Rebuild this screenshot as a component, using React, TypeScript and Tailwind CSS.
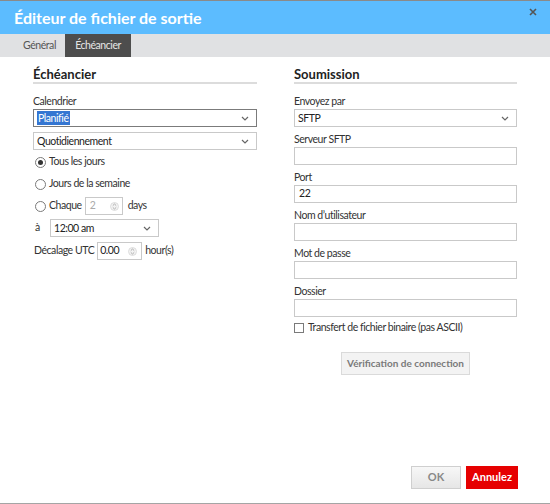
import { useState } from 'react';

const font = { fontFamily: 'Lato, "Open Sans", sans-serif' };
// small ui text, narrowed a bit to match the original widths
const t = 'text-[10.5px] tracking-[-0.45px]';

function Chevron() {
  return (
    <svg width="8" height="5" viewBox="0 0 8 5" className="shrink-0">
      <path d="M1 1 L4 4 L7 1" fill="none" stroke="#666" strokeWidth="1.2" />
    </svg>
  );
}

function Spinner() {
  return (
    <svg width="9" height="9" viewBox="0 0 9 9" className="shrink-0">
      <circle cx="4.5" cy="4.5" r="4" fill="#f3f3f3" stroke="#d6d6d6" strokeWidth="0.8" />
      <path d="M2.8 3.6 L4.5 2 L6.2 3.6 M2.8 5.4 L4.5 7 L6.2 5.4" fill="none" stroke="#999" strokeWidth="0.8" />
    </svg>
  );
}

function Select({ value, focused, selected }: { value: string; focused?: boolean; selected?: boolean }) {
  return (
    <div
      className={`h-[18px] flex items-center justify-between pl-[3px] pr-[7px] border bg-white ${
        focused ? 'border-[#7b7b7b]' : 'border-[#c9c9c9]'
      }`}
    >
      <span className={`${t} leading-[14px] ${selected ? 'bg-[#3476d2] text-white px-[1px]' : 'text-[#222]'}`}>
        {value}
      </span>
      <Chevron />
    </div>
  );
}

function Field({ label, value }: { label: string; value?: string }) {
  return (
    <div className="mt-[5px]">
      <div className={`h-[14px] ${t} leading-[14px] text-[#333]`}>{label}</div>
      <div className={`mt-[1px] h-[18px] border border-[#c9c9c9] bg-white flex items-center pl-[4px] ${t} text-[#222]`}>
        {value}
      </div>
    </div>
  );
}

function Radio({ checked, label }: { checked?: boolean; label: string }) {
  return (
    <label className="flex items-center gap-[3px]">
      <span className="w-[11px] h-[11px] rounded-full border border-[#7a7a7a] bg-white flex items-center justify-center">
        {checked && <span className="w-[5px] h-[5px] rounded-full bg-[#333]" />}
      </span>
      <span className={`${t} text-[#333]`}>{label}</span>
    </label>
  );
}

function SectionTitle({ children }: { children: string }) {
  return (
    <div className="h-[18px] border-b-2 border-[#dcdcdc] text-[13px] leading-[16px] font-bold text-[#222]">
      {children}
    </div>
  );
}

export default function App() {
  const [tab] = useState('sched');

  return (
    <div style={font} className="relative w-[550px] h-[504px] bg-white flex flex-col border-t border-[#8a8a8a] border-b border-b-[#a5a5a5]">
      {/* Header */}
      <div className="h-[33px] shrink-0 bg-[#5cbcff] flex items-center pl-[14px]">
        <h1 className="text-white text-[16px] font-bold">Éditeur de fichier de sortie</h1>
      </div>
      <button className="absolute right-[11px] top-[5px] w-[12px] h-[12px] flex items-center justify-center">
        <svg width="8" height="8" viewBox="0 0 8 8">
          <path d="M1 1 L7 7 M7 1 L1 7" stroke="#555" strokeWidth="1.6" />
        </svg>
      </button>

      {/* Tabs */}
      <div className={`h-[23px] shrink-0 bg-[#e0e1e3] flex pl-[14px] ${t}`}>
        <div className="w-[51px] flex items-center justify-center text-[#555]">Général</div>
        <div
          className={`w-[66px] flex items-center justify-center ${
            tab === 'sched' ? 'bg-[#4d4d4d] text-[#e6e6e6]' : 'text-[#555]'
          }`}
        >
          Échéancier
        </div>
      </div>

      {/* Body */}
      <div className="flex pl-[33px] pt-[9px] gap-[37px]">
        {/* Left */}
        <div className="w-[224px] flex flex-col">
          <SectionTitle>Échéancier</SectionTitle>
          <div className={`mt-[10px] h-[14px] ${t} leading-[14px] text-[#333]`}>Calendrier</div>
          <div className="mt-[1px]">
            <Select value="Planifié" focused selected />
          </div>
          <div className="mt-[5px]">
            <Select value="Quotidiennement" />
          </div>
          <div className="h-[22px] mt-[1px] flex items-center pl-[2px]">
            <Radio checked label="Tous les jours" />
          </div>
          <div className="h-[22px] flex items-center pl-[2px]">
            <Radio label="Jours de la semaine" />
          </div>
          <div className="h-[22px] flex items-center pl-[2px] gap-[3px]">
            <Radio label="Chaque" />
            <div className="w-[38px] h-[18px] border border-[#c9c9c9] flex items-center justify-between pl-[4px] pr-[3px]">
              <span className={`${t} text-[#aaa]`}>2</span>
              <Spinner />
            </div>
            <span className={`${t} text-[#333] ml-[2px]`}>days</span>
          </div>
          <div className="h-[20px] mt-[1px] flex items-center pl-[2px]">
            <span className={`w-[15px] ${t} text-[#333]`}>à</span>
            <div className="w-[109px]">
              <Select value="12:00 am" />
            </div>
          </div>
          <div className="h-[20px] mt-[3px] flex items-center gap-[3px] pl-[1px]">
            <span className={`${t} text-[#333]`}>Décalage UTC</span>
            <div className="w-[45px] h-[18px] border border-[#c9c9c9] flex items-center justify-between pl-[2px] pr-[4px]">
              <span className={`${t} text-[#222]`}>0.00</span>
              <Spinner />
            </div>
            <span className={`${t} text-[#333]`}>hour(s)</span>
          </div>
        </div>

        {/* Right */}
        <div className="w-[223px] flex flex-col">
          <SectionTitle>Soumission</SectionTitle>
          <div className={`mt-[10px] h-[14px] ${t} leading-[14px] text-[#333]`}>Envoyez par</div>
          <div className="mt-[1px]">
            <Select value="SFTP" />
          </div>
          <Field label="Serveur SFTP" />
          <Field label="Port" value="22" />
          <Field label="Nom d’utilisateur" />
          <Field label="Mot de passe" />
          <Field label="Dossier" />
          <label className="mt-[4px] h-[14px] flex items-center gap-[4px]">
            <span className="w-[10px] h-[10px] border border-[#7a7a7a] bg-white" />
            <span className={`${t} text-[#333]`}>Transfert de fichier binaire (pas ASCII)</span>
          </label>
          <div className="mt-[17px] flex justify-center">
            <button className="w-[129px] h-[23px] border border-[#dadada] bg-[#f3f3f3] text-[10px] font-bold text-[#7a7a7a]">
              Vérification de connection
            </button>
          </div>
        </div>
      </div>

      {/* Footer */}
      <div className="mt-auto mb-[14px] pr-[32px] flex justify-end gap-[5px]">
        <button className="w-[50px] h-[23px] border border-[#cfcfcf] bg-gradient-to-b from-[#f7f7f7] to-[#e6e6e6] text-[11px] font-bold text-[#888]">
          OK
        </button>
        <button className="w-[52px] h-[23px] bg-[#e60000] text-[11px] font-bold text-white">Annulez</button>
      </div>
    </div>
  );
}
